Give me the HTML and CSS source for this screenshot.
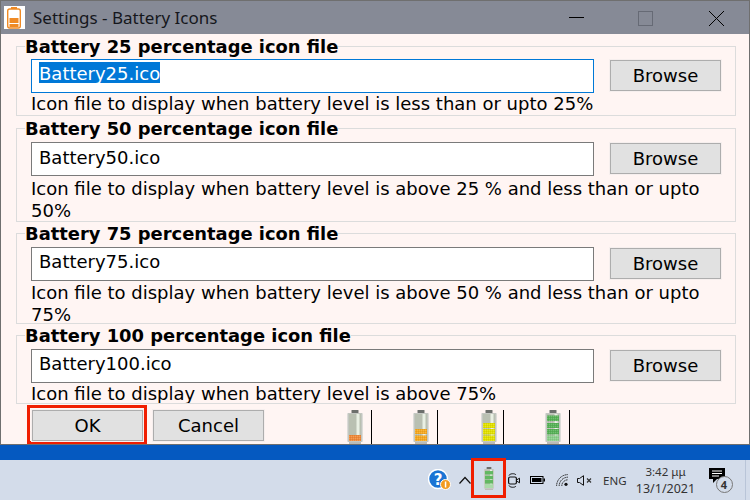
FILE: index.html
```html
<!DOCTYPE html>
<html lang="en">
<head>
<meta charset="utf-8">
<title>Settings - Battery Icons</title>
<link rel="stylesheet" href="styles.css">
</head>
<body>
<svg class="defs" width="0" height="0" aria-hidden="true">
  <defs>
    <pattern id="dither" width="2" height="2" patternUnits="userSpaceOnUse">
      <rect x="0" y="0" width="1" height="1" fill="#fff" fill-opacity=".16"/>
      <rect x="1" y="1" width="1" height="1" fill="#000" fill-opacity=".07"/>
    </pattern>
    <symbol id="shell" viewBox="0 0 16 34">
      <rect x="4.500" y="0" width="7" height="3" rx=".5" fill="#6c6f6c"/>
      <rect x="0" y="3" width="16" height="29" rx="1" fill="#dcdcd8"/>
      <rect x="1" y="3" width="14" height="29" fill="#c4c7c2"/>
      <rect x="2" y="4" width="12" height="27" fill="#b9c0b2"/>
      <rect x="9.500" y="4" width="3" height="27" fill="#e9f0e4"/>
      <rect x="2" y="32" width="12" height="2" fill="#bcbcb8"/>
    </symbol>
  </defs>
</svg>
<main class="window">
  <header class="titlebar">
    <span class="app-icon">
      <svg width="21" height="23" viewBox="0 0 21 23"><rect x="7" y="1" width="6" height="2" fill="#f08a24"/><rect x="3.700" y="3" width="12.600" height="19" rx="2" fill="#fff" stroke="#f08a24" stroke-width="1.400"/><rect x="5.500" y="12" width="9" height="5" fill="#f08a24"/><rect x="5.500" y="18" width="9" height="3" fill="#f08a24"/></svg>
    </span>
    <h1 class="title">Settings - Battery Icons</h1>
    <div class="controls">
      <svg class="ctl" width="15" height="15" viewBox="0 0 15 15"><path d="M0 6.500h15" stroke="#000" fill="none"/></svg>
      <svg class="ctl" width="15" height="15" viewBox="0 0 15 15"><rect x=".5" y=".5" width="14" height="14" stroke="#666a75" fill="none"/></svg>
      <svg class="ctl ctl-close" width="15" height="15" viewBox="0 0 15 15"><path d="M0 0l15 15M15 0L0 15" stroke="#000" fill="none"/></svg>
    </div>
  </header>
  <div class="content">
    <fieldset class="group g1">
      <legend>Battery 25 percentage icon file</legend>
      <div class="row">
        <div class="field focused"><span class="selected">Battery25.ico</span></div>
        <button class="btn browse" type="button">Browse</button>
      </div>
      <p class="hint">Icon file to display when battery level is less than or upto 25%</p>
    </fieldset>
    <fieldset class="group g2">
      <legend>Battery 50 percentage icon file</legend>
      <div class="row">
        <div class="field">Battery50.ico</div>
        <button class="btn browse" type="button">Browse</button>
      </div>
      <p class="hint">Icon file to display when battery level is above 25 % and less than or upto 50%</p>
    </fieldset>
    <fieldset class="group g3">
      <legend>Battery 75 percentage icon file</legend>
      <div class="row">
        <div class="field">Battery75.ico</div>
        <button class="btn browse" type="button">Browse</button>
      </div>
      <p class="hint">Icon file to display when battery level is above 50 % and less than or upto 75%</p>
    </fieldset>
    <fieldset class="group g4">
      <legend>Battery 100 percentage icon file</legend>
      <div class="row">
        <div class="field">Battery100.ico</div>
        <button class="btn browse" type="button">Browse</button>
      </div>
      <p class="hint">Icon file to display when battery level is above 75%</p>
    </fieldset>
    <div class="actions">
      <div class="ok-mark"><button class="btn ok" type="button">OK</button></div>
      <button class="btn cancel" type="button">Cancel</button>
      <div class="previews">
        <div class="preview">
          <svg width="16" height="34" viewBox="0 0 16 34"><use href="#shell"/><rect x="2" y="25" width="12" height="6" fill="#f08a3a"/><rect x="2" y="25" width="12" height="6" fill="url(#dither)"/></svg>
        </div>
        <div class="preview">
          <svg width="16" height="34" viewBox="0 0 16 34"><use href="#shell"/><rect x="2" y="19" width="12" height="5" fill="#f5a81f"/><rect x="2" y="25.500" width="12" height="5.500" fill="#f5a81f"/><rect x="2" y="19" width="12" height="12" fill="url(#dither)"/></svg>
        </div>
        <div class="preview third">
          <svg width="16" height="34" viewBox="0 0 16 34"><use href="#shell"/><rect x="2" y="13" width="12" height="5" fill="#e2e000"/><rect x="2" y="19" width="12" height="5.500" fill="#e2e000"/><rect x="2" y="25.500" width="12" height="5.500" fill="#e2e000"/><rect x="2" y="13" width="12" height="18" fill="url(#dither)"/></svg>
        </div>
        <div class="preview">
          <svg width="16" height="34" viewBox="0 0 16 34"><use href="#shell"/><rect x="2" y="5.500" width="12" height="5.500" fill="#58b258"/><rect x="2" y="13" width="12" height="5" fill="#58b258"/><rect x="2" y="19" width="12" height="5.500" fill="#58b258"/><rect x="2" y="25.500" width="12" height="5.500" fill="#8ccf8c"/><rect x="2" y="5" width="12" height="26" fill="url(#dither)"/></svg>
        </div>
      </div>
    </div>
  </div>
</main>
<div class="band"></div>
<footer class="taskbar">
  <svg class="t-help" width="23" height="22" viewBox="0 0 23 22"><circle cx="10" cy="10" r="9.500" fill="#1a74d4" stroke="#fff" stroke-width="1.500"/><text x="10" y="16" text-anchor="middle" class="help-mark">?</text><circle cx="17.500" cy="15.500" r="5" fill="#f29a1f" stroke="#fff"/><rect x="16.800" y="12.500" width="1.500" height="6" fill="#fff"/></svg>
  <svg class="t-chevron" width="12" height="8" viewBox="0 0 12 8"><path d="M.5 7.500L6 1.500l5.500 6" stroke="#111" stroke-width="1.200" fill="none"/></svg>
  <div class="tray-mark">
    <svg width="12" height="23" viewBox="0 0 16 34"><use href="#shell"/><rect x="2" y="6" width="12" height="5" fill="#62b862"/><rect x="2" y="13" width="12" height="5" fill="#62b862"/><rect x="2" y="19" width="12" height="5.500" fill="#62b862"/><rect x="2" y="25.500" width="12" height="5.500" fill="#a8dba8"/></svg>
  </div>
  <svg class="t-meet" width="12" height="17" viewBox="0 0 12 17"><path d="M1 3.500C1.500 1.500 7 1 8 3M1 13.500C1.500 15.500 7 16 8 14" stroke="#111" fill="none"/><rect x=".6" y="5" width="7.800" height="7" rx="1.500" stroke="#111" fill="none" stroke-width="1.200"/><path d="M8.500 8l3-1.800v4.600l-3-1.800" stroke="#111" fill="none"/></svg>
  <svg class="t-batt" width="15" height="8" viewBox="0 0 15 8"><rect x=".5" y=".5" width="12.500" height="7" fill="none" stroke="#000"/><rect x="2" y="2" width="9.500" height="4" fill="#000"/><rect x="13.500" y="2.500" width="1.500" height="3" fill="#000"/></svg>
  <svg class="t-wifi" width="12" height="12" viewBox="0 0 12 12"><path d="M.6 12A11.400 11.400 0 0 1 12 .6M3.200 12A8.800 8.800 0 0 1 12 3.200M5.800 12A6.200 6.200 0 0 1 12 5.800" stroke="#222" fill="none" stroke-dasharray="1.300 .5"/><circle cx="10" cy="10.300" r="1.600" fill="#111"/></svg>
  <svg class="t-sound" width="15" height="11" viewBox="0 0 15 11"><path d="M.5 3.500h2L6.500.7v9.600l-4-2.800h-2z" stroke="#111" fill="none"/><path d="M10 3.500l4 4M14 3.500l-4 4" stroke="#333" stroke-width="1.200" fill="none"/></svg>
  <span class="t-lang">ENG</span>
  <div class="t-clock"><span class="t-time">3:42 μμ</span><span>13/1/2021</span></div>
  <div class="t-notify">
    <svg width="16" height="15" viewBox="0 0 16 15"><path d="M0 0h16v11H8l-4 4v-4H0z" fill="#000"/><path d="M3 3h10M3 5.500h10M3 8h7" stroke="#fff"/></svg>
    <span class="badge">4</span>
  </div>
  <span class="t-desk"></span>
</footer>
</body>
</html>
```

FILE: styles.css
```css
* { box-sizing: border-box; }
html, body { margin: 0; padding: 0; }
body {
  width: 750px;
  height: 500px;
  overflow: hidden;
  background: #d3dcea;
  font-family: "DejaVu Sans", Verdana, sans-serif;
  color: #000;
}
.defs { position: absolute; }

.window {
  height: 445px;
  display: flex;
  flex-direction: column;
  background: #fff5f3;
  border: 1px solid #6f6f6f;
  overflow: hidden;
}
.titlebar {
  flex: none;
  height: 33px;
  display: flex;
  align-items: center;
  background: #868a96;
  padding-left: 3px;
}
.app-icon {
  width: 21px;
  height: 23px;
  display: flex;
  background: #fff;
}
.title {
  margin: 0 0 0 8px;
  font: 400 17px "Noto Sans", "Open Sans", sans-serif;
  color: #15171c;
}
.controls {
  margin-left: auto;
  display: flex;
  align-items: center;
  gap: 54px;
  padding: 2px 25px 0 0;
}
.ctl-close { margin-left: 2px; }

.content {
  flex: 1;
  min-height: 0;
  padding: 0 13px 0 15px;
  display: flex;
  flex-direction: column;
}
.group {
  flex: none;
  margin: 0;
  padding: 0 0 0 14px;
  border: 1px solid #dcdcdc;
  overflow: hidden;
  min-width: 0;
}
.g1 { height: 79px; margin-top: 3px; }
.g2 { height: 103px; margin-top: 3px; }
.g3 { height: 100px; margin-top: 2px; }
.g4 { height: 78px; margin-top: 2px; }
legend {
  margin-left: -6px;
  padding: 0;
  font-size: 17.900px;
  font-weight: 700;
  line-height: 19px;
}
.row {
  display: flex;
  align-items: flex-start;
  gap: 16px;
  margin-top: 4px;
}
.g1 .row { margin-top: 3px; }
.field {
  width: 563px;
  height: 34px;
  padding: 3px 0 0 7px;
  background: #fff;
  border: 1px solid #7a7a7a;
  font-size: 18px;
  line-height: 21px;
}
.g1 .field { padding-top: 2px; }
.g2 .field { padding-top: 4px; }
.field.focused { border-color: #0078d7; }
.selected {
  display: inline-block;
  padding-top: 2px;
  background: #0078d7;
  color: #fff;
  line-height: 19px;
}
.btn {
  padding: 0;
  background: #e1e1e1;
  border: 1px solid #adadad;
  outline: 1px solid #f6efee;
  font: 400 18px "DejaVu Sans", Verdana, sans-serif;
  color: #000;
}
.browse { width: 111px; height: 31px; margin-top: 1px; }
.hint {
  margin: 0;
  font-size: 18px;
  line-height: 22px;
}
.g2 .hint { margin-top: 2px; }
.g3 .hint { margin-top: 1px; }
.actions {
  flex: 1;
  display: flex;
  align-items: flex-end;
  min-height: 0;
  padding-left: 11px;
}
.ok-mark {
  display: flex;
  border: 3px solid #f01e00;
  padding: 2px 1px 0 2px;
  background: #fff5f3;
}
.ok { width: 111px; height: 31px; }
.cancel { width: 111px; height: 31px; margin: 0 0 3px 6px; }
.previews {
  display: flex;
  margin-left: 42px;
}
.preview {
  width: 66px;
  height: 34px;
  padding-left: 41px;
  display: flex;
  border-right: 1px solid #000;
}
.preview.third { padding-left: 43px; }

.band { height: 15px; background: #0559c0; }
.taskbar {
  height: 40px;
  display: flex;
  align-items: center;
  background: #d3dcea;
  padding-left: 428px;
}
.help-mark { font: 700 15px "DejaVu Sans", sans-serif; fill: #fff; }
.t-chevron { margin-left: 8px; }
.tray-mark {
  width: 35px;
  height: 40px;
  flex: none;
  align-self: flex-start;
  margin-top: -2px;
  display: flex;
  align-items: center;
  justify-content: center;
  border: 3px solid #f01e00;
}
.t-meet { margin-left: 2px; }
.t-batt { margin-left: 10px; }
.t-wifi { margin-left: 11px; }
.t-sound { margin-left: 9px; }
.t-lang { width: 23px; margin-left: 11px; font: 400 11.500px "Noto Sans", sans-serif; color: #333; }
.t-clock {
  width: 66px;
  flex: none;
  margin-left: 6.500px;
  display: flex;
  flex-direction: column;
  align-items: center;
  gap: 1px;
  font: 400 12.500px/16px "Noto Sans", sans-serif;
  color: #333;
}
.t-time { font-size: 11.500px; }
.t-notify { position: relative; margin-left: 10px; width: 24px; height: 24px; flex: none; }
.t-notify svg { display: block; }
.badge {
  position: absolute;
  left: 7px;
  top: 8px;
  width: 17px;
  height: 17px;
  border: 1px solid #777;
  border-radius: 50%;
  background: #d3dcea;
  font: 700 11px/15px "Noto Sans", sans-serif;
  color: #333;
  text-align: center;
}
.t-desk { width: 1px; height: 40px; margin-left: 12px; background: #b9c5d8; flex: none; }
```
